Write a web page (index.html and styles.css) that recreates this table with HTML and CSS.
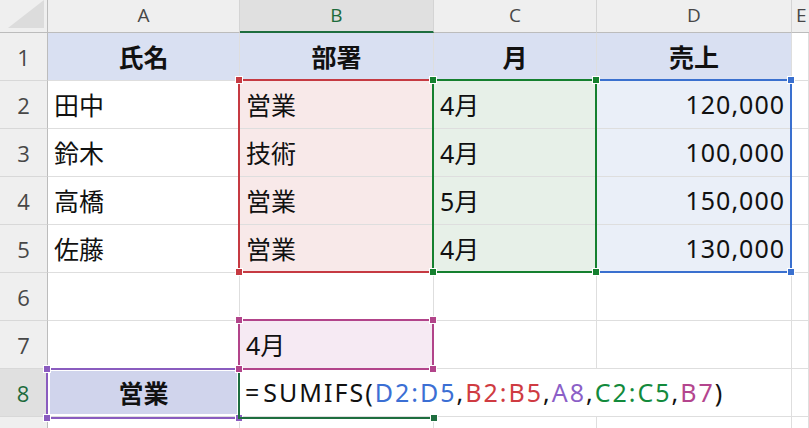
FILE: index.html
```html
<!DOCTYPE html>
<html lang="ja">
<head>
<meta charset="utf-8">
<title>SUMIFS</title>
<link rel="stylesheet" href="styles.css">
</head>
<body>
<div class="sheet">
  <div class="corner"><svg class="tri" width="36" height="28" viewBox="0 0 36 28"><polygon points="0,28 36,28 36,0" fill="#dcdcdc"/></svg></div>
  <div class="ch">A</div>
  <div class="ch sel">B</div>
  <div class="ch">C</div>
  <div class="ch">D</div>
  <div class="ch lastc">E</div>

  <div class="rh">1</div>
  <div class="c hdr">氏名</div>
  <div class="c hdr">部署</div>
  <div class="c hdr">月</div>
  <div class="c hdr">売上</div>
  <div class="c"></div>

  <div class="rh">2</div>
  <div class="c">田中</div>
  <div class="c fr">営業</div>
  <div class="c fg">4月</div>
  <div class="c fb num">120,000</div>
  <div class="c"></div>

  <div class="rh">3</div>
  <div class="c">鈴木</div>
  <div class="c fr">技術</div>
  <div class="c fg">4月</div>
  <div class="c fb num">100,000</div>
  <div class="c"></div>

  <div class="rh">4</div>
  <div class="c">高橋</div>
  <div class="c fr">営業</div>
  <div class="c fg">5月</div>
  <div class="c fb num">150,000</div>
  <div class="c"></div>

  <div class="rh">5</div>
  <div class="c">佐藤</div>
  <div class="c fr">営業</div>
  <div class="c fg">4月</div>
  <div class="c fb num">130,000</div>
  <div class="c"></div>

  <div class="rh">6</div>
  <div class="c"></div>
  <div class="c"></div>
  <div class="c"></div>
  <div class="c"></div>
  <div class="c"></div>

  <div class="rh">7</div>
  <div class="c"></div>
  <div class="c fm">4月</div>
  <div class="c"></div>
  <div class="c"></div>
  <div class="c"></div>

  <div class="rh sel">8</div>
  <div class="c a8">営業</div>
  <div class="c formula"><span class="eq">=</span>SUMIFS(<span class="k-blue">D2:D5</span>,<span class="k-red">B2:B5</span>,<span class="k-purple">A8</span>,<span class="k-green">C2:C5</span>,<span class="k-mag">B7</span>)</div>
  <div class="c"></div>

  <div class="rh"></div>
  <div class="c"></div>
  <div class="c"></div>
  <div class="c"></div>
  <div class="c"></div>
  <div class="c"></div>

  <!-- range reference outlines -->
  <div class="rng red r-b"><i class="h tl"></i><i class="h tr"></i><i class="h bl"></i><i class="h br"></i></div>
  <div class="rng blue r-d"><i class="h tl"></i><i class="h tr"></i><i class="h bl"></i><i class="h br"></i></div>
  <div class="rng green r-c"><i class="h tl"></i><i class="h tr"></i><i class="h bl"></i><i class="h br"></i></div>
  <div class="rng purple r-a8"><i class="h tl"></i><i class="h tr"></i><i class="h bl"></i><i class="h br"></i></div>
  <div class="active r-b8"><i class="fill"></i></div>
  <div class="rng mag r-b7"><i class="h tl"></i><i class="h tr"></i><i class="h bl"></i><i class="h br"></i></div>
</div>
</body>
</html>
```

FILE: styles.css
```css
* { box-sizing: border-box; }
html, body { margin: 0; padding: 0; background: #ffffff; }

.sheet {
  position: relative;
  width: 809px;
  height: 428px;
  overflow: hidden;
  display: grid;
  grid-template-columns: 48px 192px 194px 163px 195px 1fr;
  grid-template-rows: 33px repeat(8, 48px) 48px;
  font-family: "Noto Sans", "Noto Sans CJK JP", sans-serif;
}

.corner {
  background: #efefef;
  border-right: 1px solid #bcbcbc;
  border-bottom: 1px solid #bcbcbc;
  display: flex;
  align-items: flex-start;
  padding-left: 8px;
}
.tri { display: block; }

.ch {
  background: #efefef;
  border-right: 1px solid #d4d4d4;
  border-bottom: 1px solid #bcbcbc;
  display: flex;
  align-items: center;
  justify-content: center;
  font-family: "Open Sans", "Noto Sans", sans-serif;
  font-size: 19px;
  color: #474747;
  padding-bottom: 2px;
}
.ch.sel {
  background: #e0e0e0;
  color: #1d6b3c;
  border-bottom: 2px solid #1e6e3f;
  padding-bottom: 1px;
}
.ch.lastc { justify-content: flex-start; padding-left: 4px; border-right: none; }

.rh {
  background: #efefef;
  border-right: 1px solid #bcbcbc;
  border-bottom: 1px solid #d8d8d8;
  display: flex;
  align-items: center;
  justify-content: center;
  font-family: "Open Sans", "Noto Sans", sans-serif;
  font-size: 22px;
  color: #474747;
}
.rh.sel {
  background: #e0e0e0;
  color: #1d6b3c;
  border-right: 2px solid #1e6e3f;
}

.c {
  border-right: 1px solid #dedede;
  border-bottom: 1px solid #dedede;
  display: flex;
  align-items: center;
  padding: 0 6px 1px 6px;
  font-size: 25px;
  color: #111111;
  white-space: nowrap;
}
.c.hdr {
  background: #d9e0f2;
  justify-content: center;
  font-weight: 700;
}
.c.num { justify-content: flex-end; padding-right: 6px; letter-spacing: 1px; }
.c.fr { background: #f8e9e9; }
.c.fg { background: #e7f0e8; }
.c.fb { background: #eaeff8; }
.c.fm { background: #f6eaf3; }
.c.a8 {
  background: #d0d4ec;
  justify-content: center;
  font-weight: 700;
  box-shadow: inset 0 0 0 2px #ffffff;
}
.c.formula {
  grid-column: span 3;
  overflow: visible;
  padding-left: 5px;
  letter-spacing: 2px;
}
.eq { margin-right: 2px; }
.k-blue { color: #3b6fd4; }
.k-red { color: #cf3b42; }
.k-purple { color: #8b5fc7; }
.k-green { color: #138a3c; }
.k-mag { color: #b4458e; }

/* reference outlines (drawn over the grid) */
.rng, .active {
  position: absolute;
  border: 2px solid;
  pointer-events: none;
}
.rng.red { border-color: #c63a42; }
.rng.green { border-color: #15802f; }
.rng.blue { border-color: #3a70cf; }
.rng.purple { border-color: #8a5cbf; }
.rng.mag { border-color: #b2448a; }

.r-b { left: 238px; top: 79px; width: 196px; height: 194px; }
.r-c { left: 432px; top: 79px; width: 165px; height: 194px; }
.r-d { left: 595px; top: 79px; width: 197px; height: 194px; }
.r-b7 { left: 238px; top: 319px; width: 196px; height: 51px; }
.r-a8 { left: 46px; top: 368px; width: 194px; height: 51px; }

.h {
  position: absolute;
  width: 6px;
  height: 6px;
  outline: 1px solid #ffffff;
}
.red .h { background: #c63a42; }
.green .h { background: #15802f; }
.blue .h { background: #3a70cf; }
.purple .h { background: #8a5cbf; }
.mag .h { background: #b2448a; }
.h.tl { left: -4px; top: -4px; }
.h.tr { right: -4px; top: -4px; }
.h.bl { left: -4px; bottom: -4px; }
.h.br { right: -4px; bottom: -4px; }

.active {
  left: 238px; top: 368px; width: 196px; height: 51px;
  border-color: #1e6e3f;
  border-right: none;
}
.active .fill {
  position: absolute;
  right: -3px;
  bottom: -4px;
  width: 6px;
  height: 6px;
  background: #1e6e3f;
  outline: 1px solid #ffffff;
}
```
